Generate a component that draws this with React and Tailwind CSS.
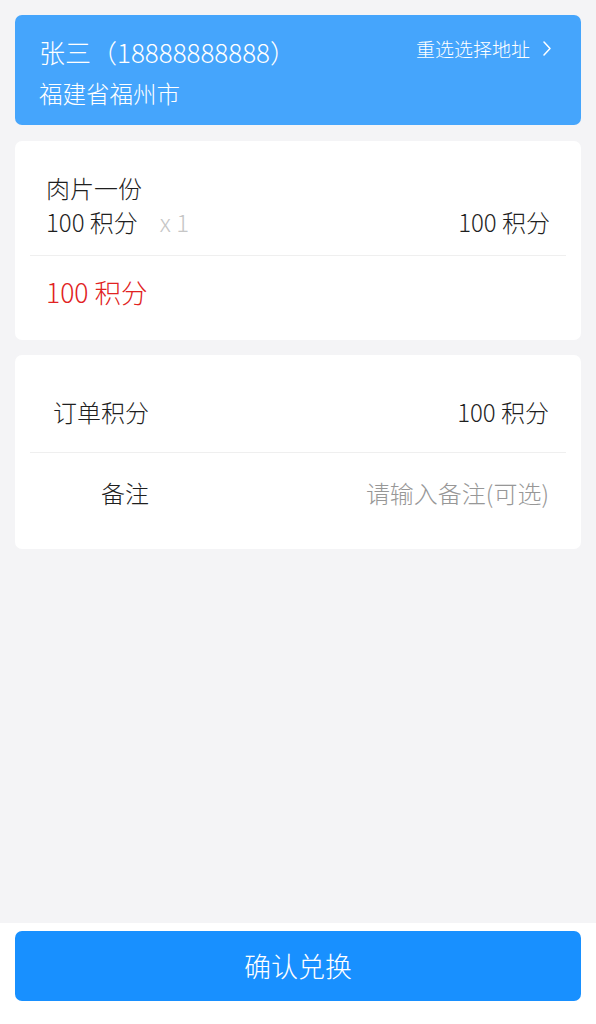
export default function App() {
  return (
    <div className="min-h-screen flex flex-col bg-[#f4f4f6] font-['Noto_Sans_CJK_SC','Noto_Sans',sans-serif] font-light text-[#1f1f1f]">
      <main className="flex-1 px-[15px] pt-[15px] flex flex-col gap-4">
        {/* Address card */}
        <div className="rounded-[7px] bg-[#45a5fc] text-white pl-[24px] pr-[30px] pt-[18px] pb-[14px]">
          <div className="flex items-center justify-between">
            <div className="text-[26px] leading-[37px]">张三（18888888888）</div>
            <div className="flex items-center gap-[13px] text-[19px] leading-[28px] -mt-[6px]">
              <span>重选选择地址</span>
              <svg width="8" height="15" viewBox="0 0 8 15" fill="none">
                <polyline points="1,1 7,7.5 1,14" stroke="white" strokeWidth="1.5" strokeLinejoin="round" strokeLinecap="round" />
              </svg>
            </div>
          </div>
          <div className="mt-[5px] text-[23.5px] leading-[36px]">福建省福州市</div>
        </div>

        {/* Product card */}
        <div className="rounded-[7px] bg-white px-[15px]">
          <div className="px-4 pt-[30px] pb-[16px]">
            <div className="text-[24px] leading-[34px]">肉片一份</div>
            <div className="flex items-center justify-between text-[24px] leading-[34px]">
              <div className="flex items-center">
                <span>100 积分</span>
                <span className="ml-[22px] text-[#c6c6c6]">x 1</span>
              </div>
              <span>100 积分</span>
            </div>
          </div>
          <div className="h-px bg-[#efefef]" />
          <div className="px-4 pt-[19px] pb-[31px]">
            <div className="text-[26.5px] leading-[34px] text-[#e12222]">100 积分</div>
          </div>
        </div>

        {/* Order card */}
        <div className="rounded-[7px] bg-white px-[15px] py-4 -mt-px">
          <div className="flex items-center justify-between py-[23.5px] pl-[21px] pr-[17px] text-[24px] leading-[34px]">
            <span className="w-[98px] text-right">订单积分</span>
            <span>100 积分</span>
          </div>
          <div className="h-px bg-[#efefef]" />
          <div className="flex items-center justify-between py-[23px] pl-[21px] pr-[17px] text-[24px] leading-[34px]">
            <span className="w-[98px] text-right">备注</span>
            <span className="text-[#979797]">请输入备注(可选)</span>
          </div>
        </div>
      </main>

      <footer className="bg-white px-[15px] pt-2 pb-[23px]">
        <button className="w-full h-[70px] rounded-[7px] bg-[#1890ff] text-white text-[27px] font-light flex items-center justify-center">
          确认兑换
        </button>
      </footer>
    </div>
  );
}
